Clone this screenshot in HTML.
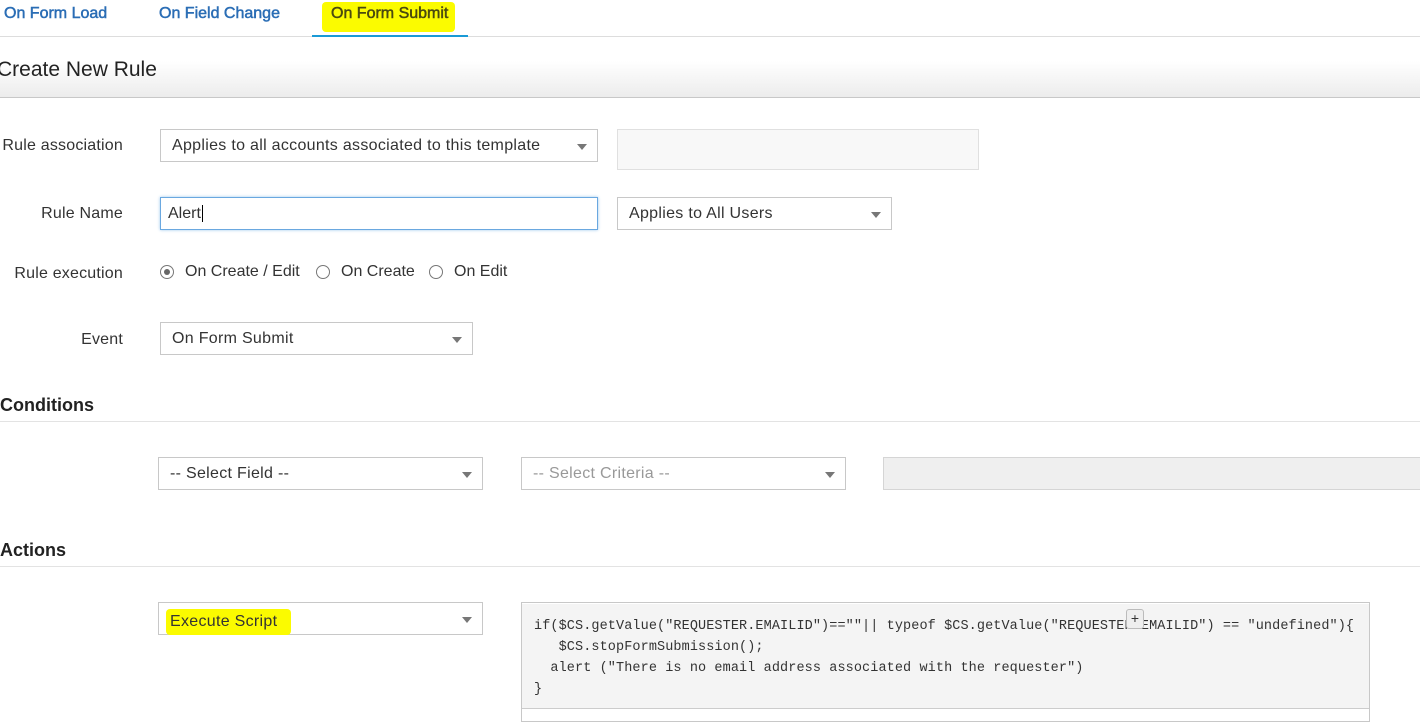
<!DOCTYPE html>
<html><head><meta charset="utf-8"><style>
*{box-sizing:border-box;margin:0;padding:0}
body{width:1420px;height:716px;overflow:hidden;background:#fff;font-family:"Liberation Sans",sans-serif;color:#333;position:relative}
.a{position:absolute}
.tab{position:absolute;top:5px;font-size:16px;color:#2a6db5;-webkit-text-stroke:0.5px #2a6db5}
.sel{position:absolute;border:1px solid #c8c8c8;background:#fff;font-size:16px;letter-spacing:0.3px;color:#333;padding-left:11px;display:flex;align-items:center;padding-top:1px}
.sel:after{content:"";position:absolute;right:10px;top:50%;margin-top:-2px;border-left:5px solid transparent;border-right:5px solid transparent;border-top:6px solid #777}
.lbl{position:absolute;font-size:16px;letter-spacing:0.2px;color:#333;right:1297px;white-space:nowrap;text-align:right}
.h{position:absolute;font-size:18px;font-weight:bold;color:#222}
.line{position:absolute;left:0;width:1420px;height:1px;background:#e3e3e3}
.radio{position:absolute;width:14px;height:14px;border:1px solid #777;border-radius:50%;background:#fff}
.rt{position:absolute;font-size:16px;color:#333}
</style></head><body>
<div class="tab" style="left:4px">On Form Load</div>
<div class="tab" style="left:159px">On Field Change</div>
<div class="a" style="left:322px;top:2px;width:133px;height:30px;background:#fbfb00;border-radius:4px"></div>
<div class="tab" style="left:331px;color:#4a4a10;-webkit-text-stroke:0.5px #4a4a10">On Form Submit</div>
<div class="line" style="top:36px;background:#ddd"></div>
<div class="a" style="left:312px;top:35px;width:156px;height:2px;background:#1a9ad6"></div>
<div class="a" style="left:0;top:37px;width:1420px;height:60px;background:linear-gradient(#fff 40%,#ececec)"></div>
<div class="a" style="left:-3px;top:58px;font-size:21px;color:#222">Create New Rule</div>
<div class="line" style="top:97px;background:#c8c8c8"></div>

<div class="lbl" style="top:137px">Rule association</div>
<div class="sel" style="left:160px;top:129px;width:438px;height:33px">Applies to all accounts associated to this template</div>
<div class="a" style="left:617px;top:129px;width:362px;height:41px;border:1px solid #e0e0e0;background:#f8f8f8"></div>

<div class="lbl" style="top:205px">Rule Name</div>
<div class="a" style="left:160px;top:197px;width:438px;height:33px;border:1px solid #6aa8e0;box-shadow:0 0 3px #9cc6ec;font-size:16px;padding:7px 0 0 7px">Alert<span style="border-left:1px solid #000;margin-left:1px"></span></div>
<div class="sel" style="left:617px;top:197px;width:275px;height:33px">Applies to All Users</div>

<div class="lbl" style="top:265px">Rule execution</div>
<div class="radio" style="left:160px;top:265px"><div style="position:absolute;left:3px;top:3px;width:6px;height:6px;border-radius:50%;background:#666"></div></div>
<div class="rt" style="left:185px;top:263px">On Create / Edit</div>
<div class="radio" style="left:316px;top:265px"></div>
<div class="rt" style="left:341px;top:263px">On Create</div>
<div class="radio" style="left:429px;top:265px"></div>
<div class="rt" style="left:454px;top:263px">On Edit</div>

<div class="lbl" style="top:331px">Event</div>
<div class="sel" style="left:160px;top:322px;width:313px;height:33px">On Form Submit</div>

<div class="h" style="left:0;top:395px">Conditions</div>
<div class="line" style="top:421px"></div>
<div class="sel" style="left:158px;top:457px;width:325px;height:33px">-- Select Field --</div>
<div class="sel" style="left:521px;top:457px;width:325px;height:33px;color:#999">-- Select Criteria --</div>
<div class="a" style="left:883px;top:457px;width:540px;height:33px;border:1px solid #d5d5d5;background:#efefef"></div>

<div class="h" style="left:0;top:540px">Actions</div>
<div class="line" style="top:566px"></div>
<div class="sel" style="left:158px;top:602px;width:325px;height:33px;padding-left:7px"><span style="background:#fbfb00;border-radius:4px;padding:4px 14px 4px 4px;margin-top:6px">Execute Script</span></div>

<div class="a" style="left:521px;top:602px;width:849px;height:120px;border:1px solid #c8c8c8;background:#fff"></div>
<div class="a" style="left:522px;top:604px;width:847px;height:105px;background:#f4f4f4;border-bottom:1px solid #ccc"></div>
<pre class="a" style="left:534px;top:616px;font-family:'Liberation Mono',monospace;font-size:13.5px;letter-spacing:0.1px;line-height:21px;color:#333">if($CS.getValue("REQUESTER.EMAILID")==""|| typeof $CS.getValue("REQUESTER.EMAILID") == "undefined"){
   $CS.stopFormSubmission();
  alert ("There is no email address associated with the requester")
}</pre>
<div class="a" style="left:1126px;top:609px;width:18px;height:20px;border:1px solid #bbb;border-radius:3px;background:#eee;font-size:14px;text-align:center;line-height:17px">+</div>
</body></html>
